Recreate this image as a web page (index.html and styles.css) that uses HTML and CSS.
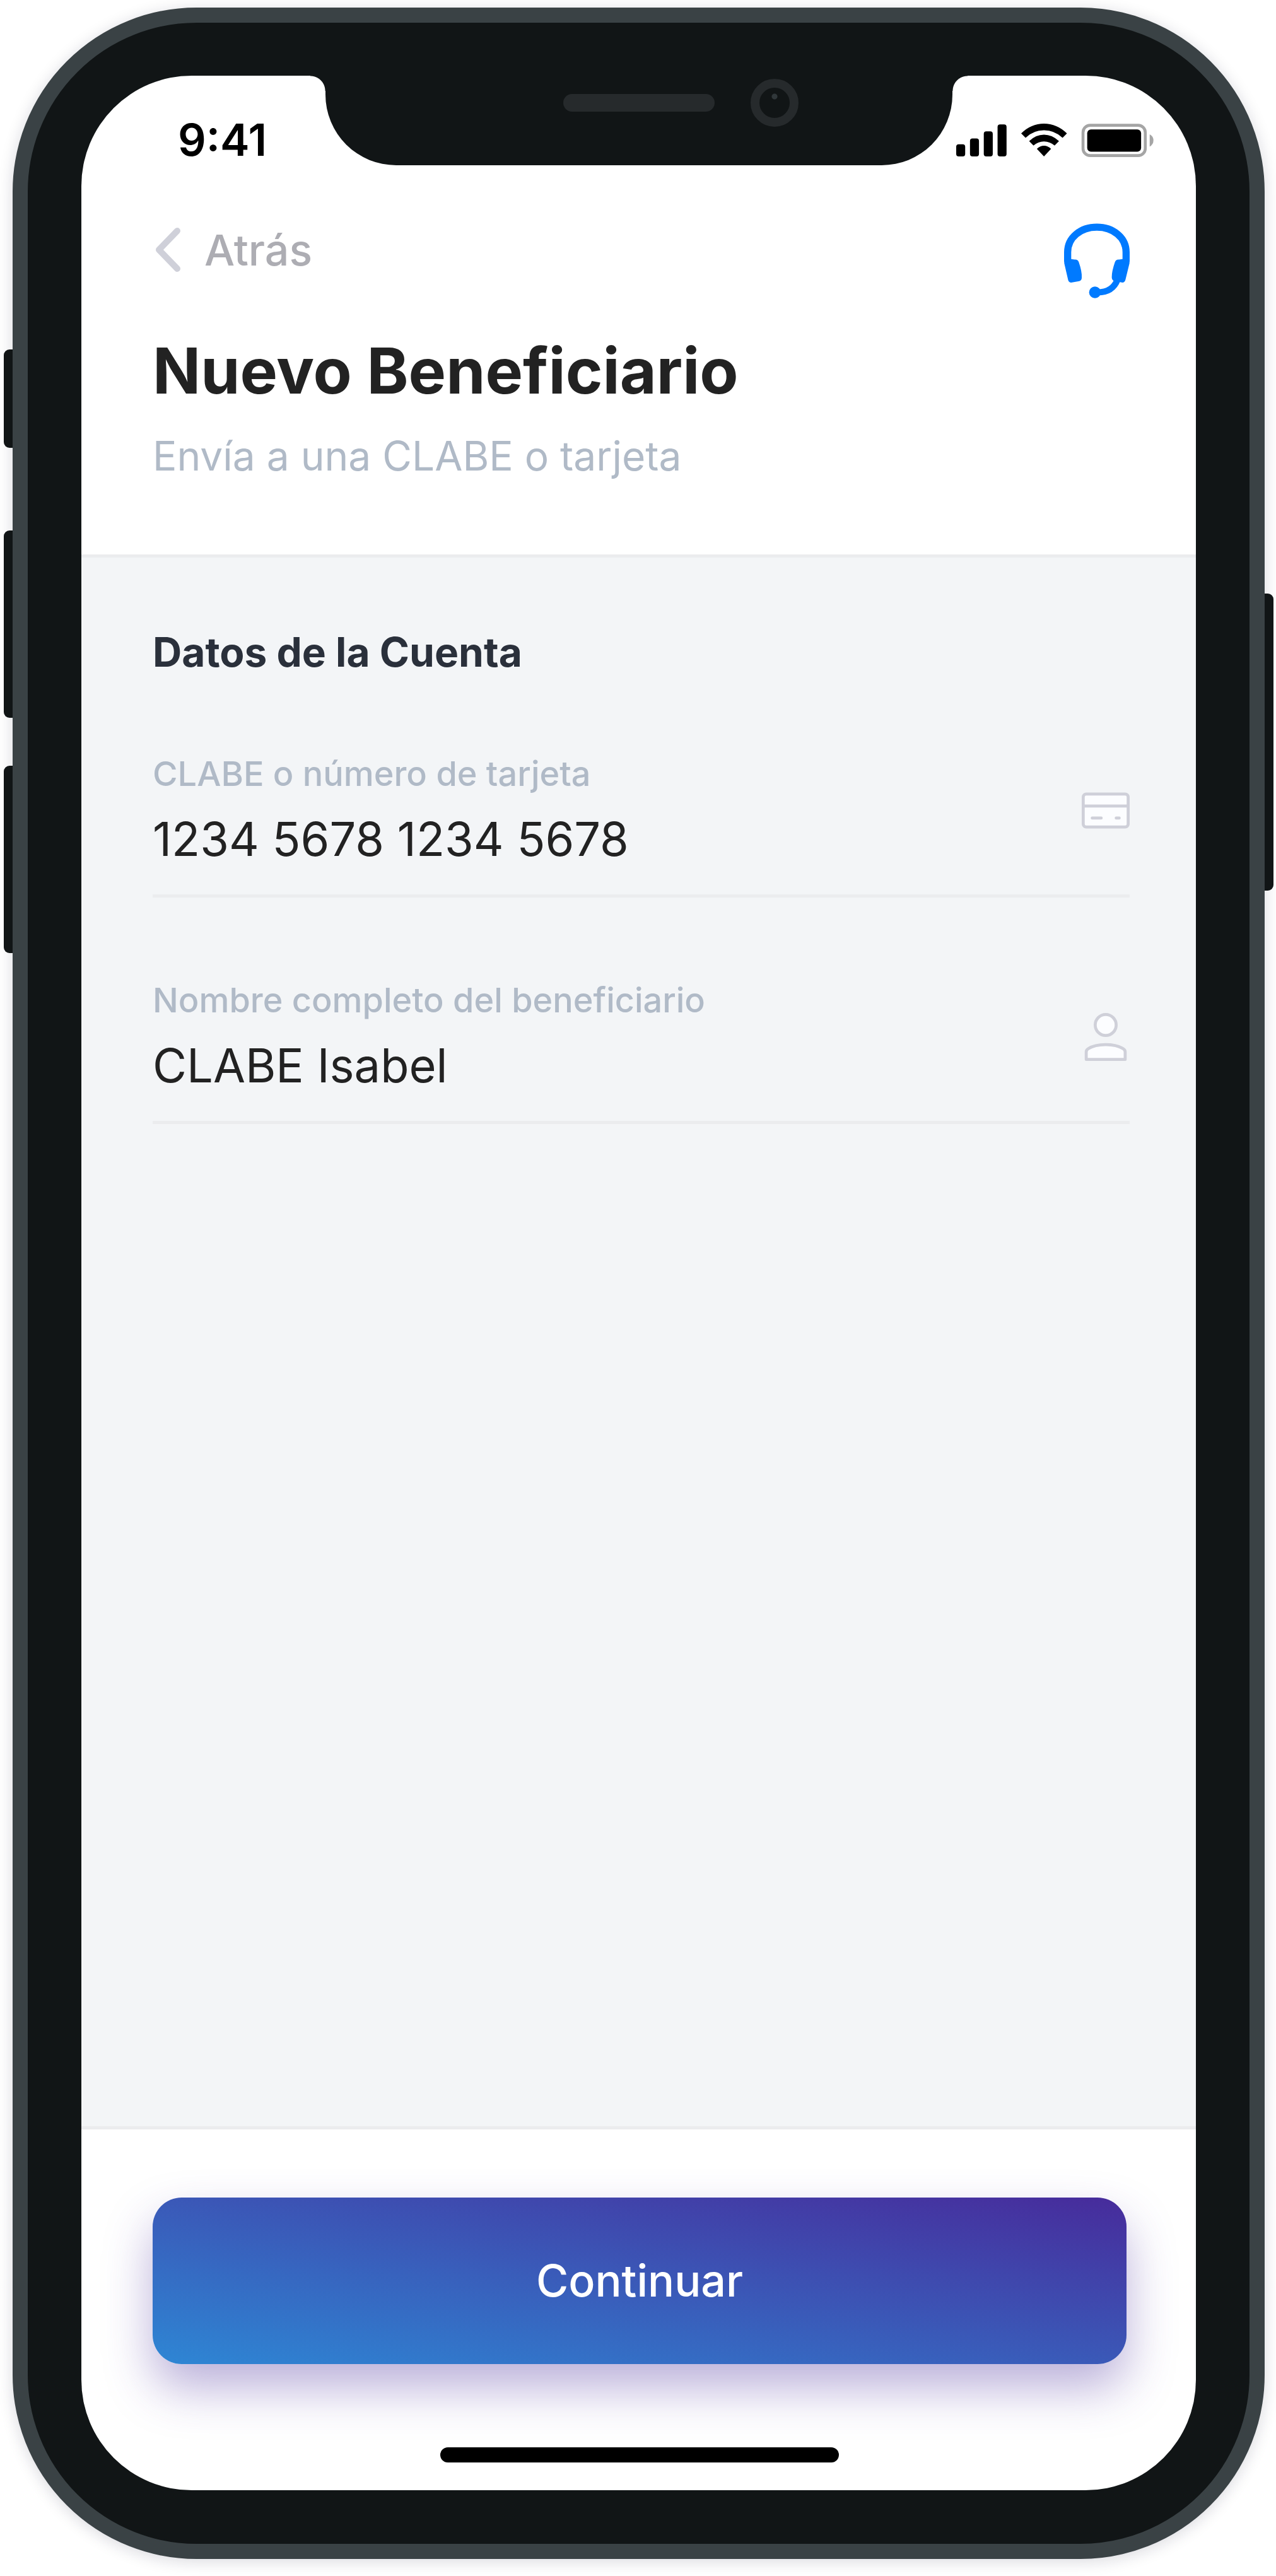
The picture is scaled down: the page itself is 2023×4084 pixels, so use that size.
FILE: index.html
```html
<!DOCTYPE html>
<html lang="es">
<head>
<meta charset="utf-8">
<meta name="viewport" content="width=device-width, initial-scale=1">
<title>Nuevo Beneficiario</title>
<link rel="stylesheet" href="styles.css">
</head>
<body>
<div class="device">
  <span class="key key-mute"></span>
  <span class="key key-volume-up"></span>
  <span class="key key-volume-down"></span>
  <span class="key key-power"></span>

  <div class="screen">
    <div class="notch">
      <span class="speaker"></span>
      <span class="camera"></span>
    </div>

    <header class="header">
      <div class="status-bar">
        <span class="time">9:41</span>
        <svg class="status-icons" viewBox="0 0 945 160" aria-hidden="true">
          <g fill="#000">
            <rect x="0" y="99" width="43" height="58" rx="12"/>
            <rect x="66" y="71" width="43" height="86" rx="12"/>
            <rect x="132" y="37" width="43" height="120" rx="12"/>
            <rect x="198" y="4" width="43" height="153" rx="12"/>
            <path d="M311 47Q358 0 420 0T530 47L509 68Q471 32 420 32T332 68Z"/>
            <path d="M349 84Q381 53 420 53T492 84L471 105Q448 85 420 85T370 105Z"/>
            <path d="M386 121Q402 106 420 106T454 121L420 157Z"/>
            <rect x="627" y="28" width="258" height="106" rx="18"/>
          </g>
          <rect x="607" y="8" width="298" height="145" rx="34" fill="none" stroke="#a5a5a5" stroke-width="14"/>
          <path d="M926 51Q944 60 944 80T926 110Z" fill="#a5a5a5"/>
        </svg>
      </div>

      <nav class="nav">
        <a class="back" href="#">
          <svg class="chevron" viewBox="0 0 40 70" aria-hidden="true"><path d="M35 5L6 35L35 65" fill="none" stroke="#cfd0d9" stroke-width="10" stroke-linecap="round" stroke-linejoin="round"/></svg>
          Atrás
        </a>
        <button class="support" type="button" aria-label="Ayuda">
          <svg viewBox="0 0 312 356" aria-hidden="true">
            <path d="M17 182V137C17 67 79 18 156 18S295 67 295 137V182" fill="none" stroke="#007aff" stroke-width="34"/>
            <path d="M0 170H34L50 172Q65 170 70 184Q86 230 84 258Q84 271 72 275L38 281Q22 283 19 268L1 190Z" fill="#007aff"/>
            <path d="M312 170H278L262 172Q247 170 242 184Q226 230 227 258Q228 271 240 275L274 281Q288 283 292 268L311 190Z" fill="#007aff"/>
            <path d="M254 268C240 304 212 328 160 328" fill="none" stroke="#007aff" stroke-width="30"/>
            <circle cx="147" cy="328" r="28" fill="#007aff"/>
          </svg>
        </button>
      </nav>

      <h1 class="title">Nuevo Beneficiario</h1>
      <p class="subtitle">Envía a una CLABE o tarjeta</p>
    </header>

    <main class="content">
      <h2 class="section-title">Datos de la Cuenta</h2>
      <form class="fields" id="beneficiary">
        <div class="field">
          <div class="field-text">
            <label class="label" for="account">CLABE o número de tarjeta</label>
            <input class="value" id="account" type="text" value="1234 5678 1234 5678">
          </div>
          <svg class="field-icon" viewBox="0 0 16 16" aria-hidden="true">
            <rect x=".5" y="2.5" width="15" height="11" rx="1" fill="#fcfdff" stroke="#cfd0d9"/>
            <path d="M.5 6.5H15.500M3.500 10.500H6.500M11.500 10.500H12.500" fill="none" stroke="#cfd0d9" stroke-linecap="round"/>
          </svg>
        </div>
        <div class="field">
          <div class="field-text">
            <label class="label" for="name">Nombre completo del beneficiario</label>
            <input class="value" id="name" type="text" value="CLABE Isabel">
          </div>
          <svg class="field-icon" viewBox="0 0 16 16" aria-hidden="true">
            <g fill="#fcfdff" stroke="#cfd0d9" stroke-linejoin="round">
              <circle cx="8" cy="4" r="3.500"/>
              <path d="M1.500 15.500V13Q1.500 12.300 2.200 11.900C5 10.100 11 10.100 13.800 11.900Q14.500 12.300 14.500 13V15.500Z"/>
            </g>
          </svg>
        </div>
      </form>
    </main>

    <footer class="footer">
      <button class="submit" type="submit" form="beneficiary">Continuar</button>
      <span class="home-bar"></span>
    </footer>
  </div>
</div>
</body>
</html>
```
FILE: styles.css
```css
* {
  box-sizing: border-box;
}

body {
  margin: 0;
  background: #fff;
  color: #222;
  font-family: Inter, "Liberation Sans", sans-serif;
}

/* Phone body */
.device {
  position: relative;
  display: flex;
  min-height: calc(100vh - 39px);
  margin: 12px 18px 27px 20px;
  padding: 84px 85px 85px;
  border: 24px solid #3a4245;
  border-radius: 292px;
  background: #111516;
  box-shadow: 0 4px 24px rgba(20, 20, 50, 0.16);
}

.key {
  position: absolute;
  left: -38px;
  width: 14px;
  border-radius: 9px 0 0 9px;
  background: #111516;
}

.key-mute {
  top: 518px;
  height: 156px;
}

.key-volume-up {
  top: 805px;
  height: 297px;
}

.key-volume-down {
  top: 1178px;
  height: 297px;
}

.key-power {
  top: 905px;
  right: -38px;
  left: auto;
  height: 471px;
  border-radius: 0 9px 9px 0;
}

.screen {
  position: relative;
  display: flex;
  flex: 1;
  flex-direction: column;
  overflow: hidden;
  border-radius: 175px;
  background: #fff;
}

/* Notch laid over the top edge of the screen */
.notch {
  position: absolute;
  top: 0;
  left: 50%;
  width: 994px;
  height: 142px;
  margin-left: -497px;
  border-radius: 0 0 112px 112px;
  background: #111516;
}

.notch::before,
.notch::after {
  content: "";
  position: absolute;
  top: 0;
  width: 24px;
  height: 24px;
}

.notch::before {
  right: 100%;
  background: radial-gradient(circle at 0 100%, transparent 23px, #111516 24px);
}

.notch::after {
  left: 100%;
  background: radial-gradient(circle at 100% 100%, transparent 23px, #111516 24px);
}

.speaker {
  position: absolute;
  top: 29px;
  left: 377px;
  width: 240px;
  height: 28px;
  border-radius: 14px;
  background: #262a2c;
}

.camera {
  position: absolute;
  top: 5px;
  left: 674px;
  width: 76px;
  height: 76px;
  border: 14px solid #262a2c;
  border-radius: 50%;
  background: radial-gradient(circle at 24px 14px, #30373a 4px, transparent 5px);
}

/* Header */
.header {
  padding: 62px 105px 116px 113px;
  border-bottom: 5px solid #ebecee;
}

.status-bar {
  display: flex;
  align-items: center;
  justify-content: space-between;
  margin: 0 -39px 0 40px;
}

.time {
  color: #000;
  font-size: 70px;
  font-weight: 600;
  line-height: 80px;
}

.status-icons {
  width: 315px;
  height: 53px;
}

.nav {
  display: flex;
  align-items: flex-start;
  justify-content: space-between;
  margin-top: 92px;
}

.back {
  display: flex;
  align-items: center;
  gap: 38px;
  padding-left: 4px;
  color: #adadb3;
  font-size: 68px;
  font-weight: 500;
  line-height: 84px;
  text-decoration: none;
}

.chevron {
  width: 40px;
  height: 70px;
}

.support {
  display: flex;
  padding: 0;
  border: 0;
  background: none;
}

.support svg {
  width: 104px;
  height: 119px;
}

.title {
  margin: 55px 0 0;
  font-size: 100px;
  font-weight: 700;
  line-height: 120px;
}

.subtitle {
  margin: 35px 0 0;
  color: #b0bac7;
  font-size: 64px;
  line-height: 80px;
}

/* Form */
.content {
  flex: 1;
  padding: 110px 105px 110px 113px;
  background: #f3f5f7;
}

.section-title {
  margin: 0;
  color: #2a303b;
  font-size: 64px;
  font-weight: 700;
  line-height: 80px;
}

.fields {
  display: flex;
  flex-direction: column;
  gap: 129px;
  margin-top: 119px;
}

.field {
  display: flex;
  padding-bottom: 42px;
  border-bottom: 5px solid #ebecee;
}

.field-text {
  display: flex;
  flex: 1;
  flex-direction: column;
  gap: 23px;
}

.label {
  color: #b0bac7;
  font-size: 54px;
  font-weight: 500;
  line-height: 68px;
}

.value {
  width: 100%;
  height: 92px;
  padding: 0;
  border: 0;
  outline: 0;
  background: none;
  color: #222;
  font: 400 74px/92px Inter, "Liberation Sans", sans-serif;
}

.field-icon {
  width: 76px;
  height: 76px;
  margin-top: 54px;
}

/* Footer */
.footer {
  display: flex;
  flex-direction: column;
  align-items: center;
  padding: 108px 110px 44px 113px;
  border-top: 5px solid #ebecee;
}

.submit {
  width: 100%;
  height: 264px;
  border: 0;
  border-radius: 46px;
  background: linear-gradient(to top right, #2e86d4, #472b9b);
  box-shadow: 0 38px 76px rgba(70, 43, 155, 0.37);
  color: #fff;
  font: 500 70px/84px Inter, "Liberation Sans", sans-serif;
}

.home-bar {
  width: 632px;
  height: 24px;
  margin-top: 132px;
  border-radius: 12px;
  background: #000;
}
```
